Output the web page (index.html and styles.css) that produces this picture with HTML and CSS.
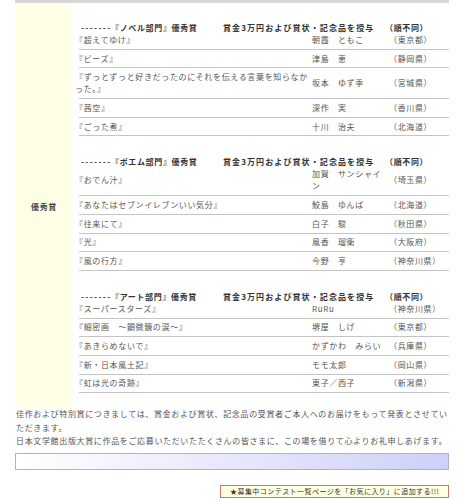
FILE: index.html
```html
<!DOCTYPE html>
<html lang="ja">
<head>
<meta charset="utf-8">
<title>優秀賞</title>
<link rel="stylesheet" href="styles.css">
</head>
<body>
<div class="page">
  <div class="topbar"></div>
  <div class="award">
    <div class="award-label">優秀賞</div>
    <div class="award-body">
      <section class="dept">
        <div class="dept-head"><span class="dname"><span class="dash">-------</span>『ノベル部門』優秀賞</span><span class="prize">賞金3万円および賞状・記念品を授与</span><span class="order">（順不同）</span></div>
        <div class="row"><div class="title">『超えてゆけ』</div><div class="name">朝霞　ともこ</div><div class="pref">（東京都）</div></div>
        <div class="row"><div class="title">『ビーズ』</div><div class="name">津島　恵</div><div class="pref">（静岡県）</div></div>
        <div class="row"><div class="title">『ずっとずっと好きだったのにそれを伝える言葉を知らなかった。』</div><div class="name">坂本　ゆず季</div><div class="pref">（宮城県）</div></div>
        <div class="row"><div class="title">『茜空』</div><div class="name">深作　実</div><div class="pref">（香川県）</div></div>
        <div class="row"><div class="title">『ごった煮』</div><div class="name">十川　治夫</div><div class="pref">（北海道）</div></div>
      </section>
      <section class="dept">
        <div class="dept-head"><span class="dname"><span class="dash">-------</span>『ポエム部門』優秀賞</span><span class="prize">賞金3万円および賞状・記念品を授与</span><span class="order">（順不同）</span></div>
        <div class="row"><div class="title">『おでん汁』</div><div class="name">加賀　サンシャイン</div><div class="pref">（埼玉県）</div></div>
        <div class="row"><div class="title">『あなたはセブンイレブンいい気分』</div><div class="name">鮫島　ゆんば</div><div class="pref">（北海道）</div></div>
        <div class="row"><div class="title">『往来にて』</div><div class="name">白子　駿</div><div class="pref">（秋田県）</div></div>
        <div class="row"><div class="title">『光』</div><div class="name">風香　瑠衛</div><div class="pref">（大阪府）</div></div>
        <div class="row"><div class="title">『風の行方』</div><div class="name">今野　亨</div><div class="pref">（神奈川県）</div></div>
      </section>
      <section class="dept">
        <div class="dept-head"><span class="dname"><span class="dash">-------</span>『アート部門』優秀賞</span><span class="prize">賞金3万円および賞状・記念品を授与</span><span class="order">（順不同）</span></div>
        <div class="row"><div class="title">『スーパースターズ』</div><div class="name">RuRu</div><div class="pref">（神奈川県）</div></div>
        <div class="row"><div class="title">『細密画　～顕微鏡の涙～』</div><div class="name">堺屋　しげ</div><div class="pref">（東京都）</div></div>
        <div class="row"><div class="title">『あきらめないで』</div><div class="name">かずかわ　みらい</div><div class="pref">（兵庫県）</div></div>
        <div class="row"><div class="title">『新・日本風土記』</div><div class="name">モモ太郎</div><div class="pref">（岡山県）</div></div>
        <div class="row"><div class="title">『虹は光の奇跡』</div><div class="name">東子／西子</div><div class="pref">（新潟県）</div></div>
      </section>
    </div>
  </div>
  <p class="note">佳作および特別賞につきましては、賞金および賞状、記念品の受賞者ご本人へのお届けをもって発表とさせていただきます。<br>日本文学館出版大賞に作品をご応募いただいたたくさんの皆さまに、この場を借りて心よりお礼申しあげます。</p>
  <div class="bar"></div>
  <div class="fav-wrap"><a class="fav" href="#">★募集中コンテスト一覧ページを「お気に入り」に追加する!!!</a></div>
</div>
</body>
</html>
```

FILE: styles.css
```css
* { box-sizing: border-box; }
html, body { margin: 0; padding: 0; background: #fff; }
body {
  font-family: "Noto Sans CJK JP", "Noto Sans", sans-serif;
  font-size: 8px;
  letter-spacing: 0.65px;
  color: #555;
}
.page { margin: 0 10px 0 15px; }
.topbar { height: 3px; background: #d6d6d6; }
.award { display: flex; margin-top: 2px; }
.award-label {
  flex: none;
  width: 56px;
  margin-left: 1px;
  background: #ffffe6;
  display: flex;
  align-items: center;
  justify-content: center;
  font-weight: bold;
  color: #444;
}
.award-body {
  flex: 1;
  padding: 14px 0 14px 3px;
  display: flex;
  flex-direction: column;
  gap: 17px;
}
.dept-head {
  display: grid;
  grid-template-columns: 148px 162px 1fr;
  height: 12px;
  line-height: 12px;
  margin: 3px 0 -3px;
  font-weight: bold;
  color: #333;
  white-space: nowrap;
}
.dash { display: inline-block; width: 36px; padding-left: 6px; letter-spacing: 1.4px; }
.prize { letter-spacing: 1.1px; }
.row {
  display: grid;
  grid-template-columns: 237px 77px 1fr;
  align-items: center;
  padding-bottom: 1px;
  background: linear-gradient(#c4c4c4, #c4c4c4) no-repeat 4px 100% / calc(100% - 4px) 1px;
}
.row > div { padding: 2.85px 0; line-height: 12px; }
.name { padding-left: 2px; padding-right: 1px; }
.pref { padding-left: 3px; white-space: nowrap; }
.note {
  margin: 0;
  padding-left: 1px;
  line-height: 13.5px;
  color: #555;
}
.bar {
  margin-top: 5px;
  height: 17px;
  border: 1px solid #a9b6c6;
  background: linear-gradient(to right, #ffffff, #cfcff8);
}
.fav-wrap { display: flex; justify-content: flex-end; margin-top: 15px; }
.fav {
  display: block;
  width: 229px;
  height: 13px;
  line-height: 11px;
  padding-left: 9px;
  border: 1px solid #c47a6e;
  background: #ffffe2;
  color: #333;
  font-size: 7px;
  letter-spacing: 0.45px;
  text-decoration: none;
  white-space: nowrap;
}
```
